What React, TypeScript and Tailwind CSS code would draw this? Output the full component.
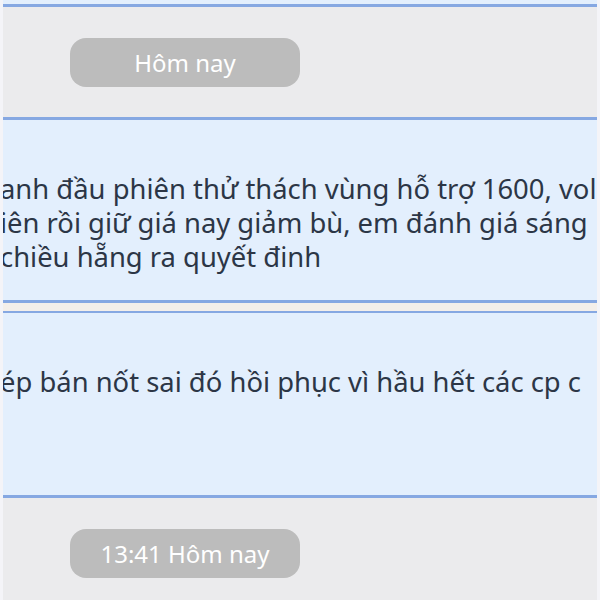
export default function App() {
  const font = { fontFamily: '"Noto Sans", "Open Sans", sans-serif' };
  return (
    <div
      className="w-[600px] h-[600px] overflow-hidden bg-[#ebebed] flex flex-col border-x-[3px] border-x-[#f4f4f8]"
      style={font}
    >
      {/* previous bubble tail */}
      <div className="h-[4px] bg-[#e3effd]" />
      <div className="h-[3px] bg-[#86a8e2]" />

      {/* date chip */}
      <div className="h-[110px] pl-[67px] pt-[31px]">
        <div className="w-[230px] h-[49px] pt-[1px] rounded-[16px] bg-[#bcbcbc] flex items-center justify-center text-white text-[24px]">
          Hôm nay
        </div>
      </div>

      <div className="h-[3px] bg-[#86a8e2]" />
      {/* message 1 */}
      <div className="h-[180px] bg-[#e3effd] pt-[52px] text-[#2c3646] text-[27.4px] leading-[34px] whitespace-nowrap -ml-[3px]">
        <div>anh đầu phiên thử thách vùng hỗ trợ 1600, vol</div>
        <div>iên rồi giữ giá nay giảm bù, em đánh giá sáng</div>
        <div>chiều hẵng ra quyết đinh</div>
      </div>
      <div className="h-[3px] bg-[#86a8e2]" />

      <div className="h-[8px] bg-[#f4efea]" />

      <div className="h-[2px] bg-[#86a8e2]" />
      {/* message 2 */}
      <div className="h-[182px] bg-[#e3effd] pt-[52px] text-[#2c3646] text-[27.4px] leading-[34px] whitespace-nowrap -ml-[3px]">
        <div>ép bán nốt sai đó hồi phục vì hầu hết các cp c</div>
      </div>
      <div className="h-[3px] bg-[#86a8e2]" />

      {/* time chip */}
      <div className="flex-1 pl-[67px] pt-[31px]">
        <div className="w-[230px] h-[49px] pt-[1px] rounded-[16px] bg-[#bcbcbc] flex items-center justify-center text-white text-[24px]">
          13:41 Hôm nay
        </div>
      </div>
    </div>
  );
}
